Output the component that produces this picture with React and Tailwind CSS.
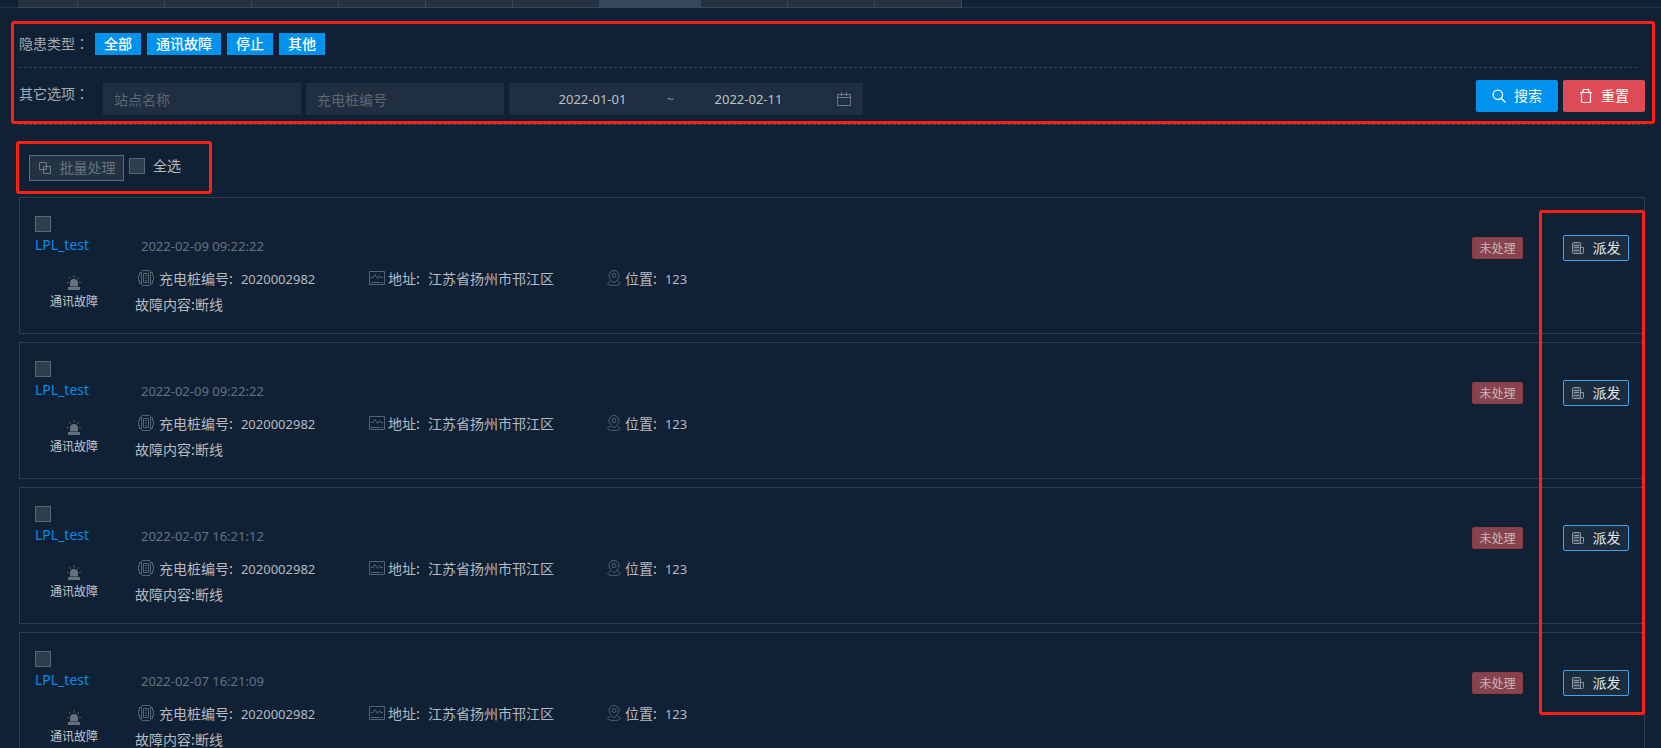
import React, { useState } from 'react';

const TABS = [
    { id: 1, width: 'w-[60px]' },
    { id: 2, width: 'w-[87px]' },
    { id: 3, width: 'w-[87px]' },
    { id: 4, width: 'w-[87px]' },
    { id: 5, width: 'w-[87px]' },
    { id: 6, width: 'w-[87px]' },
    { id: 7, width: 'w-[87px]' },
    { id: 8, width: 'w-[101px]', active: true },
    { id: 9, width: 'w-[87px]' },
    { id: 10, width: 'w-[87px]' },
    { id: 11, width: 'w-[87px]' },
];

const TYPES = ['全部', '通讯故障', '停止', '其他'];

const RECORDS = [
    { id: 1, time: '2022-02-09 09:22:22' },
    { id: 2, time: '2022-02-09 09:22:22' },
    { id: 3, time: '2022-02-07 16:21:12' },
    { id: 4, time: '2022-02-07 16:21:09' },
].map((r) => ({
    ...r,
    site: 'LPL_test',
    type: '通讯故障',
    pile: '2020002982',
    address: '江苏省扬州市邗江区',
    position: '123',
    content: '断线',
    status: '未处理',
}));

const SearchIcon = () => (
    <svg width="14" height="14" viewBox="0 0 14 14" fill="none" stroke="#fff" strokeWidth="1.3" aria-hidden="true">
        <circle cx="5.8" cy="5.8" r="4.7" />
        <path d="M9.2 9.200l4.300 4.300" />
    </svg>
);

const CalendarIcon = () => (
    <svg width="14" height="14" viewBox="0 0 14 14" fill="none" stroke="#6f7984" aria-hidden="true">
        <path d="M.5 2.5h13v11H.5zM.5 5.5h13M4.5 0v4M9.5 0v4" />
    </svg>
);

const TrashIcon = () => (
    <svg width="14" height="14" viewBox="0 0 14 14" fill="none" stroke="#fff" strokeWidth="1.2" aria-hidden="true">
        <path d="M1 3.500h12M3.500 3.500l1-3h5l1 3M2.500 3.500v9q0 1 1 1h7q1 0 1-1v-9" />
    </svg>
);

const BatchIcon = () => (
    <svg width="14" height="14" viewBox="0 0 14 14" fill="none" stroke="#6a7581" aria-hidden="true">
        <path d="M1.500 1.500h7v7h-7zM5.500 5.500h7v7h-7z" />
    </svg>
);

const AlarmIcon = () => (
    <svg width="14" height="15" viewBox="0 0 14 15" fill="#66717c" stroke="#66717c" aria-hidden="true">
        <path stroke="none" d="M3 11.500V8Q3 4 7 4t4 4v3.500zM1 12h12v3H1z" />
        <path fill="none" strokeWidth=".8" d="M7 0v2.500M2 2l1.500 2M12 2l-1.500 2M0 7.500h1.800M12.200 7.500H14" />
    </svg>
);

const PileIcon = () => (
    <svg width="16" height="16" viewBox="0 0 16 16" fill="none" stroke="#56626e" aria-hidden="true">
        <path d="M4.500.5h7q1 0 1 1v13q0 1-1 1h-7q-1 0-1-1v-13q0-1 1-1zM5.500 3.500h5v9h-5zM3.500 2.500h-2v3h-1v5h1v3h2M12.500 2.500h2v3h1v5h-1v3h-2M7 5.500h2M7 8h2M7 10.500h2" />
    </svg>
);

const MonitorIcon = () => (
    <svg width="16" height="14" viewBox="0 0 16 14" fill="none" stroke="#56626e" aria-hidden="true">
        <path d="M.5.5h15v13H.5zM2 11.500h9M12 11.500h2M2 6.500h2l2-3 2.500 4 2-3 1 2H14" />
    </svg>
);

const PinIcon = () => (
    <svg width="14" height="16" viewBox="0 0 14 16" fill="none" stroke="#56626e" aria-hidden="true">
        <path d="M7 13C4.500 10.500 2 8.500 2 5.500a5 5 0 0 1 10 0c0 3-2.500 5-5 7.500zM3.500 11.500C-1 12.500-.5 15.500 7 15.500s8-3 3.500-4" />
        <circle cx="7" cy="5.500" r="2" />
    </svg>
);

const DispatchIcon = () => (
    <svg width="12" height="12" viewBox="0 0 12 12" fill="none" stroke="#8d969f" aria-hidden="true">
        <path fill="#3b4a58" d="M1.500.5h6q1 0 1 1v10h-7q-1 0-1-1v-9q0-1 1-1z" />
        <path d="M8.500 5.500h3v5q0 1-1 1h-2M2 3.500h5M2 5.500h5M2 8.500h5" />
    </svg>
);

const Latin = ({ children }) => <span className="font-['Noto_Sans',sans-serif] text-[13px]">{children}</span>;

// the full-width colon sits in the middle of its box only in the TC face
const Title = ({ children, className }) => (
    <span className={className}>
        {children}
        <span className="font-['Noto_Sans_CJK_TC',sans-serif]">：</span>
    </span>
);

const Checkbox = ({ checked, onChange, label }) => (
    <input
        type="checkbox"
        checked={checked}
        onChange={onChange}
        aria-label={label}
        className="block size-4 shrink-0 appearance-none border border-[#5b6672] bg-[#2f3e4d] checked:bg-[#0092ed]"
    />
);

const Field = ({ icon, label, value, className }) => (
    <div className={`flex items-center ${className}`}>
        {icon}
        <span>{label}:</span>
        <span className="ml-2">{value}</span>
    </div>
);

const RecordCard = ({ record, checked, onToggle }) => (
    <article className="flex h-[137px] border border-[#2d3e4d] px-[15px] pt-[18px]">
        <div className="w-[100px] shrink-0">
            <Checkbox checked={checked} onChange={onToggle} label={`选择 ${record.site}`} />
            <a href="#site" className="mt-[3px] block font-['Noto_Sans',sans-serif] text-sm leading-5 text-[#0b8ae6]">
                {record.site}
            </a>
            <div className="mt-5 flex w-[78px] flex-col items-center">
                <AlarmIcon />
                <span className="mt-[3px] text-xs leading-4 text-[#c3c8cc]">{record.type}</span>
            </div>
        </div>
        <div className="min-w-0 flex-1 pt-[19px] text-sm leading-5 text-[#b4bac0]">
            <time className="block pl-[6px] text-[#66717d]">
                <Latin>{record.time}</Latin>
            </time>
            <div className="mt-3 flex h-5 items-center">
                <Field
                    className="w-[234px] pl-[3px]"
                    icon={<span className="mr-[5px]"><PileIcon /></span>}
                    label="充电桩编号"
                    value={<Latin>{record.pile}</Latin>}
                />
                <Field
                    className="w-[238px]"
                    icon={<span className="mr-[3px]"><MonitorIcon /></span>}
                    label="地址"
                    value={record.address}
                />
                <Field
                    icon={<span className="mr-1"><PinIcon /></span>}
                    label="位置"
                    value={<Latin>{record.position}</Latin>}
                />
            </div>
            <p className="mt-[6px]">故障内容:{record.content}</p>
        </div>
        <div className="flex items-start gap-10 pt-[19px]">
            <span className="mt-[2px] flex h-[22px] w-[51px] items-center justify-center rounded-[2px] border border-[#8f3a42] bg-[#87444f] text-xs text-[#ccb4ba]">
                {record.status}
            </span>
            <button
                type="button"
                className="flex h-[26px] w-[66px] items-center justify-center gap-[9px] rounded-[2px] border border-[#3aa5ee] bg-[#1b2c3e] text-sm text-[#e4e6e8]"
            >
                <DispatchIcon />
                <span className="pb-[2px]">派发</span>
            </button>
        </div>
    </article>
);

const App = () => {
    const [selected, setSelected] = useState([]);
    const [site, setSite] = useState('');
    const [pile, setPile] = useState('');
    const [start, setStart] = useState('2022-01-01');
    const [end, setEnd] = useState('2022-02-11');

    const toggle = (id) => {
        setSelected(selected.includes(id) ? selected.filter((s) => s !== id) : [...selected, id]);
    };

    const toggleAll = () => {
        setSelected(selected.length === RECORDS.length ? [] : RECORDS.map((r) => r.id));
    };

    const reset = () => {
        setSite('');
        setPile('');
    };

    return (
        <div className="h-screen overflow-hidden bg-[#112135] font-['Noto_Sans_CJK_SC',sans-serif] text-sm text-[#a3abb2]">
            <nav className="flex h-2 border-b border-[#233244] pl-[18px]">
                {TABS.map((t) => (
                    <div
                        key={t.id}
                        className={`h-2 border-r border-b border-[#3a4856] ${t.width} ${t.active ? 'bg-[#36485d]' : 'bg-[#243243]'}`}
                    />
                ))}
            </nav>

            <section className="mt-[13px] mr-[6px] ml-[11px] h-[103px] rounded-[3px] border-3 border-[#ff1f14] pt-[9px] pl-[5px] pr-[7px]">
                <div className="mr-2 flex h-[35px] items-start border-b border-dashed border-[#34445a]">
                    <Title className="w-[76px] leading-5">隐患类型</Title>
                    <div className="flex gap-[6px]">
                        {TYPES.map((t) => (
                            <button key={t} type="button" className="h-[22px] bg-[#0092ed] px-[9px] pb-[2px] font-medium leading-5 text-white">
                                {t}
                            </button>
                        ))}
                    </div>
                </div>
                <div className="flex items-start pt-3">
                    <Title className="w-[84px] leading-[26px]">其它选项</Title>
                    <div className="mt-[3px] flex gap-[5px]">
                        <input
                            value={site}
                            onChange={(e) => setSite(e.target.value)}
                            placeholder="站点名称"
                            aria-label="站点名称"
                            className="h-8 w-[198px] bg-[#1f2e40] px-[11px] outline-none placeholder:text-[#5c6772]"
                        />
                        <input
                            value={pile}
                            onChange={(e) => setPile(e.target.value)}
                            placeholder="充电桩编号"
                            aria-label="充电桩编号"
                            className="h-8 w-[198px] bg-[#1f2e40] px-[11px] outline-none placeholder:text-[#5c6772]"
                        />
                        <div className="flex h-8 w-[354px] items-center bg-[#1f2e40] pr-3 pl-[11px] font-['Noto_Sans',sans-serif] text-[13px] text-[#bcc2c7]">
                            <input
                                value={start}
                                onChange={(e) => setStart(e.target.value)}
                                aria-label="开始日期"
                                className="w-[145px] bg-transparent text-center outline-none"
                            />
                            <span className="w-[11px] text-center text-[#8a939b]">~</span>
                            <input
                                value={end}
                                onChange={(e) => setEnd(e.target.value)}
                                aria-label="结束日期"
                                className="w-[145px] bg-transparent text-center outline-none"
                            />
                            <span className="ml-auto"><CalendarIcon /></span>
                        </div>
                    </div>
                    <div className="ml-auto flex gap-[5px] text-white">
                        <button type="button" className="flex h-8 w-[82px] items-center justify-center gap-2 rounded-[2px] bg-[#0092ed]">
                            <SearchIcon />
                            <span className="pb-[2px]">搜索</span>
                        </button>
                        <button type="button" onClick={reset} className="flex h-8 w-[82px] items-center justify-center gap-2 rounded-[2px] bg-[#de4a56]">
                            <TrashIcon />
                            <span className="pb-[2px]">重置</span>
                        </button>
                    </div>
                </div>
            </section>

            <div className="mr-4 ml-[19px] border-t border-dashed border-[#34445a]" />

            <div className="mt-4 ml-4 flex h-[53px] w-[196px] items-start rounded-[3px] border-3 border-[#ff1f14] pt-[11px] pl-[10px]">
                <button
                    type="button"
                    className="flex h-[26px] w-[95px] items-center justify-center gap-2 border border-[#5f6a76] bg-[#243344] text-[#67727e]"
                >
                    <BatchIcon />
                    <span className="pb-[2px]">批量处理</span>
                </button>
                <label className="mt-[3px] ml-[5px] flex h-4 items-center gap-2 text-[#b4bac0]">
                    <Checkbox checked={selected.length === RECORDS.length} onChange={toggleAll} label="全选" />
                    <span className="pb-[2px]">全选</span>
                </label>
            </div>

            <main className="relative mt-[3px] mr-4 ml-[19px] flex flex-col gap-2">
                {RECORDS.map((r) => (
                    <RecordCard key={r.id} record={r} checked={selected.includes(r.id)} onToggle={() => toggle(r.id)} />
                ))}
                <div className="pointer-events-none absolute top-[13px] right-0 h-[505px] w-[106px] rounded-[3px] border-3 border-[#ff1f14]" />
            </main>
        </div>
    );
};

export default App;
